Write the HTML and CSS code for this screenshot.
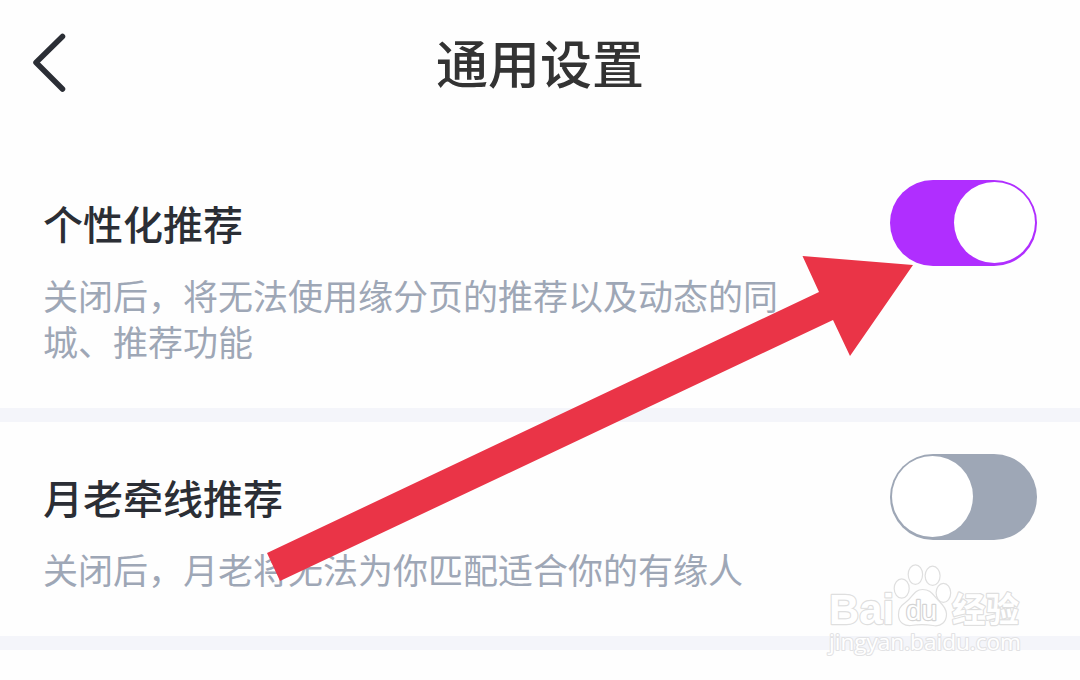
FILE: index.html
```
<!DOCTYPE html>
<html lang="zh-CN">
<head>
    <meta charset="UTF-8">
    <meta name="viewport" content="width=device-width, initial-scale=1.0">
    <title>通用设置</title>
    <link rel="stylesheet" href="styles.css">
</head>
<body>
    <header class="header">
        <svg class="back" width="36" height="62" viewBox="0 0 36 62">
            <path d="M31.5 4.5 L5 30.5 L31.5 57"/>
        </svg>
        <h1>通用设置</h1>
    </header>

    <section class="setting">
        <div class="row">
            <h2>个性化推荐</h2>
            <div class="toggle on"><div class="knob"></div></div>
        </div>
        <p>关闭后，将无法使用缘分页的推荐以及动态的同城、推荐功能</p>
    </section>

    <section class="setting second">
        <div class="row">
            <h2>月老牵线推荐</h2>
            <div class="toggle"><div class="knob"></div></div>
        </div>
        <p>关闭后，月老将无法为你匹配适合你的有缘人</p>
    </section>

    <!-- pointer arrow -->
    <svg class="arrow" width="1080" height="680" viewBox="0 0 1080 680">
        <polygon points="267,553 819,292 802.5,256 913,265 850,356 833,320 280,581"/>
    </svg>

    <svg class="watermark" width="210" height="100" viewBox="820 560 210 100">
        <text class="bai" x="829" y="624" textLength="65" lengthAdjust="spacingAndGlyphs">Bai</text>
        <ellipse cx="901.7" cy="588.5" rx="7.5" ry="9.7"/>
        <ellipse cx="915.4" cy="574.6" rx="7.2" ry="9.8"/>
        <ellipse cx="932.6" cy="575.8" rx="7.5" ry="9.6"/>
        <ellipse cx="943.4" cy="592.8" rx="7.3" ry="9.5"/>
        <path d="M922.5 589.5 C914 589.5 913 597 906 602 C899 607 898.5 610 898.5 615 C898.5 623 905 626 911 625.5 C918 624.5 926 624.5 933 625.5 C941 627 946.5 622 946.5 614 C946.5 609 943 605 939 601 C933 595 931 589.5 922.5 589.5Z"/>
        <text class="du" x="906" y="620" textLength="31" lengthAdjust="spacingAndGlyphs">du</text>
        <text class="jingyan" x="952" y="622" textLength="67" lengthAdjust="spacingAndGlyphs">经验</text>
        <text class="url" x="829" y="650" textLength="192" lengthAdjust="spacingAndGlyphs">jingyan.baidu.com</text>
    </svg>
</body>
</html>
```
FILE: styles.css
```
body {
    margin: 0;
    height: 680px;
    overflow: hidden;
    background: #fefefe;
    color: #2b2e35;
    font-family: "Noto Sans CJK SC", sans-serif;
    position: relative;
}
h1, h2, p {
    margin: 0;
}
.header {
    height: 130px;
    display: grid;
    grid-template-columns: 120px 1fr 120px;
}
.back {
    margin: 32px 0 0 31px;
    fill: none;
    stroke: #2b2e35;
    stroke-width: 5.5;
    stroke-linecap: round;
    stroke-linejoin: round;
}
h1 {
    text-align: center;
    font-size: 52px;
    font-weight: 500;
    line-height: 124px;
    color: #333;
}
.setting {
    box-sizing: border-box;
    height: 292px;
    padding: 50px 43px 0 43px;
    border-bottom: 14px solid #f4f5fa;
}
.second {
    height: 228px;
    padding-top: 32px;
}
.row {
    display: flex;
    justify-content: space-between;
    height: 86px;
}
h2 {
    font-size: 40px;
    font-weight: 500;
    line-height: 87px;
}
.toggle {
    box-sizing: border-box;
    width: 147px;
    height: 86px;
    padding: 2px;
    border-radius: 43px;
    background: #9ea7b6;
    display: flex;
}
.toggle.on {
    justify-content: flex-end;
    background: #b02eff;
}
.knob {
    width: 81px;
    height: 81px;
    border-radius: 50%;
    background: #fff;
}
p {
    width: 740px;
    margin-top: 6px;
    font-size: 35px;
    line-height: 46px;
    color: #9ea7b6;
}
.arrow {
    position: absolute;
    left: 0;
    top: 0;
    fill: #ea3447;
}
.watermark {
    position: absolute;
    left: 820px;
    top: 560px;
    fill: #fff;
    stroke: #dfdfdf;
    stroke-width: 1.2;
}
.watermark text {
    stroke-width: 2.4;
    stroke-linejoin: round;
    paint-order: stroke;
}
.watermark .bai {
    font: bold 43px "Liberation Sans", sans-serif;
}
.watermark .du {
    font: 27px "Liberation Sans", sans-serif;
    stroke: #d4d4d4;
}
.watermark .jingyan {
    font: bold 34px "Noto Sans CJK SC", sans-serif;
}
.watermark .url {
    font: 500 21.5px "Open Sans", "Noto Sans", sans-serif;
    stroke: #e2e2e4;
    stroke-width: 2;
}
```
